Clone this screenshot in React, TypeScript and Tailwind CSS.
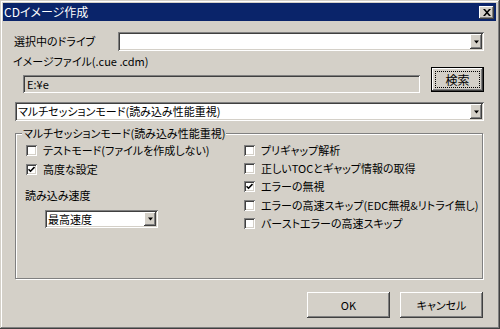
import React from 'react';

const raised =
  'shadow-[inset_-1px_-1px_0_#404040,inset_1px_1px_0_#ffffff,inset_-2px_-2px_0_#808080,inset_2px_2px_0_#d4d0c8]';
const sunken =
  'shadow-[inset_1px_1px_0_#808080,inset_-1px_-1px_0_#ffffff,inset_2px_2px_0_#404040,inset_-2px_-2px_0_#d4d0c8]';

const DropArrow: React.FC = () => (
  <div className={`w-[12px] h-full bg-[#d4d0c8] flex items-center justify-center ${raised}`}>
    <svg width="7" height="4" viewBox="0 0 7 4">
      <path d="M1 0.5h5L3.5 3.5z" fill="#000" />
    </svg>
  </div>
);

interface ComboProps {
  value: string;
  className?: string;
}

const Combo: React.FC<ComboProps> = ({ value, className = '' }) => (
  <div className={`bg-white flex p-[2px] ${sunken} ${className}`}>
    <div className="flex-1 pl-[1px] flex items-center whitespace-nowrap overflow-hidden">{value}</div>
    <DropArrow />
  </div>
);

interface CheckProps {
  label: string;
  checked?: boolean;
  className?: string;
}

const Check: React.FC<CheckProps> = ({ label, checked = false, className = 'h-[19px]' }) => (
  <div className={`flex items-center gap-[6px] whitespace-nowrap ${className}`}>
    <div className={`w-[11px] h-[11px] bg-white flex items-center justify-center ${sunken}`}>
      {checked && (
        <svg width="7" height="7" viewBox="0 0 7 7">
          <path d="M0.5 3.2l2 2 4-4.2" fill="none" stroke="#000" strokeWidth="1.6" />
        </svg>
      )}
    </div>
    <span>{label}</span>
  </div>
);

interface ButtonProps {
  label: string;
  className?: string;
}

const PushButton: React.FC<ButtonProps> = ({ label, className = '' }) => (
  <div className={`bg-[#d4d0c8] flex items-center justify-center ${raised} ${className}`}>{label}</div>
);

export default function App() {
  return (
    <div
      className="w-[500px] h-[329px] bg-[#d4d0c8] p-[3px] flex flex-col text-[11px] text-black [font-feature-settings:'palt'] shadow-[inset_-1px_-1px_0_#404040,inset_1px_1px_0_#d4d0c8,inset_-2px_-2px_0_#808080,inset_2px_2px_0_#ffffff]"
      style={{ fontFamily: '"Noto Sans CJK JP", "Liberation Sans", sans-serif' }}
    >
      {/* title bar */}
      <div className="h-[18px] mr-[1px] bg-[#0a246a] flex items-center justify-between pl-[1px] pr-[2px]">
        <span className="text-white text-[12px] leading-[18px]">CDイメージ作成</span>
        <div className={`w-[15px] h-[13px] bg-[#d4d0c8] flex items-center justify-center ${raised}`}>
          <svg width="8" height="7" viewBox="0 0 8 7">
            <path d="M0 0h2l2 2.2L6 0h2L5 3.5 8 7H6L4 4.8 2 7H0l3-3.5z" fill="#000" />
          </svg>
        </div>
      </div>

      <div className="flex-1 flex flex-col pl-[12px] pr-[13px]">
        {/* drive */}
        <div className="flex items-center h-[19px] mt-[11px]">
          <span className="-ml-[1px]">選択中のドライブ</span>
          <Combo value="" className="ml-auto w-[366px] h-[19px]" />
        </div>

        {/* image file */}
        <div className="h-[12px] leading-[12px] mt-[4px] -ml-[2px]">イメージファイル(.cue .cdm)</div>
        <div className="flex items-start">
          <div className={`ml-[8px] mt-[8px] w-[397px] h-[18px] bg-[#d4d0c8] pl-[4px] leading-[18px] ${sunken}`}>
            E:¥e
          </div>
          <div className="ml-auto w-[53px] h-[25px] border border-black">
            <div className={`w-full h-full bg-[#d4d0c8] p-[3px] ${raised}`}>
              <div className="w-full h-full border border-dotted border-black flex items-center justify-center text-[12px]">
                検索
              </div>
            </div>
          </div>
        </div>

        {/* mode */}
        <Combo value="マルチセッションモード(読み込み性能重視)" className="mt-[9px] h-[19px]" />

        {/* group */}
        <div className="relative mt-[12px] h-[146px] border border-[#808080] shadow-[1px_1px_0_#ffffff,inset_1px_1px_0_#ffffff] mr-[1px] pt-[7px] flex">
          <span className="absolute -top-[8px] left-[6px] px-[1px] bg-[#d4d0c8] leading-[14px]">
            マルチセッションモード(読み込み性能重視)
          </span>
          <div className="w-[228px] pl-[10px] flex flex-col">
            <Check label="テストモード(ファイルを作成しない)" />
            <Check label="高度な設定" checked />
            <div className="mt-[10px] h-[12px] leading-[12px] -ml-[1px]">読み込み速度</div>
            <Combo value="最高速度" className="mt-[9px] ml-[19px] w-[113px] h-[18px]" />
          </div>
          <div className="flex flex-col">
            <Check label="プリギャップ解析" className="h-[18.3px]" />
            <Check label="正しいTOCとギャップ情報の取得" className="h-[18.3px]" />
            <Check label="エラーの無視" checked className="h-[18.3px]" />
            <Check label="エラーの高速スキップ(EDC無視&リトライ無し)" className="h-[18.3px]" />
            <Check label="バーストエラーの高速スキップ" className="h-[18.3px]" />
          </div>
        </div>

        {/* buttons */}
        <div className="flex justify-end gap-[10px] mt-[13px] mr-[1px]">
          <PushButton label="OK" className="w-[83px] h-[26px]" />
          <PushButton label="キャンセル" className="w-[83px] h-[26px]" />
        </div>
      </div>
    </div>
  );
}
